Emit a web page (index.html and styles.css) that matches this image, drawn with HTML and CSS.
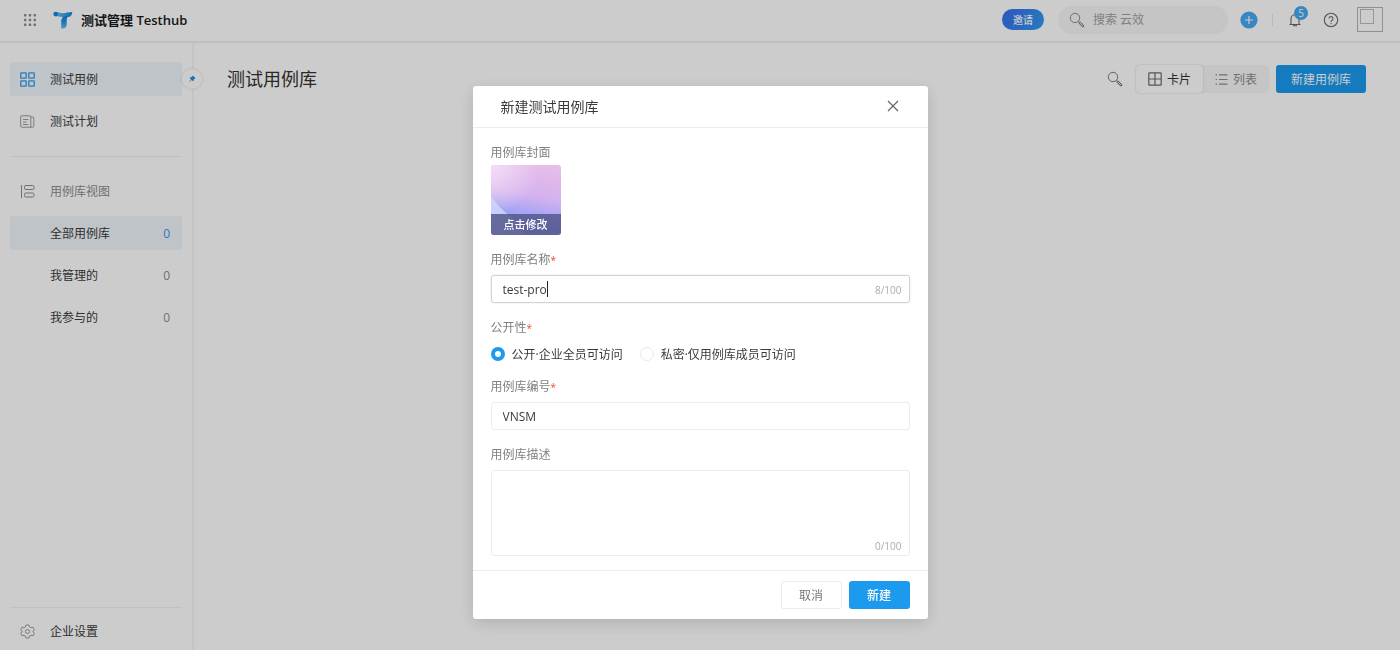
FILE: index.html
```html
<!DOCTYPE html>
<html lang="zh-CN">
<head>
<meta charset="utf-8">
<title>测试管理 Testhub</title>
<link rel="stylesheet" href="styles.css">
</head>
<body>
<div class="app">
  <header class="topbar">
    <button class="icon-btn apps" aria-label="应用">
      <svg width="12" height="12" viewBox="0 0 12 12" fill="#8c8c8c"><rect width="2.400" height="2.400" rx=".6"/><rect x="4.800" width="2.400" height="2.400" rx=".6"/><rect x="9.600" width="2.400" height="2.400" rx=".6"/><rect y="4.800" width="2.400" height="2.400" rx=".6"/><rect x="4.800" y="4.800" width="2.400" height="2.400" rx=".6"/><rect x="9.600" y="4.800" width="2.400" height="2.400" rx=".6"/><rect y="9.600" width="2.400" height="2.400" rx=".6"/><rect x="4.800" y="9.600" width="2.400" height="2.400" rx=".6"/><rect x="9.600" y="9.600" width="2.400" height="2.400" rx=".6"/></svg>
    </button>
    <a class="brand" href="#">
      <svg width="20" height="18" viewBox="0 0 20 18">
        <defs>
          <linearGradient id="stem" x1="0" y1="0" x2="0" y2="1"><stop offset="0" stop-color="#0a7fd6"/><stop offset=".5" stop-color="#1b9aee"/><stop offset="1" stop-color="#74bdf0"/></linearGradient>
          <linearGradient id="bar" x1="0" y1="0" x2="1" y2="0"><stop offset="0" stop-color="#6cc0f5"/><stop offset="1" stop-color="#0b86dc"/></linearGradient>
        </defs>
        <path d="M3 1C6 1.200 7.500 2.200 10 2.200 13 2.200 15 1 19.300 1 19 4.500 17.500 5.900 14.800 5.900L8.500 5.900C6.500 5.900 5.500 5.200 3.200 5.200Z" fill="url(#bar)"/>
        <path d="M8.200 17.500V10.600C8.200 7.400 10 5.200 13.400 5.200L15.800 5.600C14 6.200 13.700 7.400 13.700 9V13.500C13.700 16.100 12.200 17.500 9.800 17.500Z" fill="url(#stem)"/>
        <circle cx="2.700" cy="3.100" r="2.400" fill="#1287df"/>
      </svg>
      <span>测试管理 Testhub</span>
    </a>
    <button class="invite">邀请</button>
    <label class="search">
      <svg width="16" height="16" viewBox="0 0 16 16" fill="none" stroke="#8c8c8c"><circle cx="6" cy="6" r="4.700"/><path d="M9.400 9.400l1.300 1.300"/><path d="M10.800 10.800l3.200 3.200" stroke-width="2.600" stroke-linecap="round"/><path d="M10.900 10.900l3 3" stroke="#f2f2f2" stroke-width=".9"/></svg>
      <input type="text" placeholder="搜索 云效" aria-label="搜索 云效">
    </label>
    <button class="icon-btn add" aria-label="新建">
      <svg width="18" height="18" viewBox="0 0 18 18"><circle cx="9" cy="9" r="8.600" fill="#45a9f0"/><path d="M5 9h8M9 5v8" stroke="#fff" stroke-width="1.200"/></svg>
    </button>
    <span class="divider"></span>
    <button class="icon-btn bell" aria-label="通知">
      <svg width="14" height="15" viewBox="0 0 14 15" fill="none" stroke="#6b6b6b" stroke-width="1.100"><path d="M1.500 12.500h11M3 12.500V6.800a4 4 0 0 1 8 0v5.700M5.600 13v.8h2.800V13M7 1.200v1.500"/></svg>
      <span class="badge">5</span>
    </button>
    <button class="icon-btn help" aria-label="帮助">
      <svg width="16" height="16" viewBox="0 0 16 16" fill="none" stroke="#6b6b6b" stroke-width="1.100"><circle cx="8" cy="8" r="6.700"/><path d="M6 6.500a2 2 0 1 1 3.100 1.700C8.300 8.700 8 9 8 9.900"/><path d="M8 11v1.200"/></svg>
    </button>
    <button class="icon-btn avatar" aria-label="头像">
      <svg width="26" height="26" viewBox="0 0 26 26" fill="none"><rect x=".5" y=".5" width="25" height="24" stroke="#b4b4b4"/><rect x="3.500" y="2.500" width="13" height="14" stroke="#bcbcbc"/></svg>
    </button>
  </header>

  <div class="workspace">
    <aside class="sidebar">
      <nav class="nav">
        <a class="nav-item active" href="#">
          <svg width="15" height="15" viewBox="0 0 15 15" fill="none" stroke="#329fea" stroke-width="1.300"><rect x=".8" y=".8" width="5.400" height="5.400" rx=".4"/><rect x="8.800" y=".8" width="5.400" height="5.400" rx=".4"/><rect x=".8" y="8.800" width="5.400" height="5.400" rx=".4"/><rect x="8.800" y="8.800" width="5.400" height="5.400" rx=".4"/></svg>
          <span>测试用例</span>
        </a>
        <a class="nav-item" href="#">
          <svg width="15" height="15" viewBox="0 0 15 15" fill="none" stroke="#9b9b9b"><path d="M10.800 13.200V2.800a1 1 0 0 0-1-1H1.700a1 1 0 0 0-1 1v9.400a1 1 0 0 0 1 1h11.100a1 1 0 0 0 1-1V4a1 1 0 0 0-1-1h-2M3 5.500h5.300M3 8h3.500M3 10.500h5.300"/></svg>
          <span>测试计划</span>
        </a>
      </nav>
      <hr class="rule">
      <h2 class="nav-item nav-title">
        <svg width="15" height="15" viewBox="0 0 15 15" fill="none" stroke="#8c8c8c"><path d="M1.500 1v13"/><rect x="4.500" y="1.500" width="9.500" height="4" rx="1.300"/><rect x="4.500" y="9" width="9.500" height="4" rx="1.300"/></svg>
        <span>用例库视图</span>
      </h2>
      <nav class="nav">
        <a class="nav-item sub active" href="#"><span>全部用例库</span><span class="count">0</span></a>
        <a class="nav-item sub" href="#"><span>我管理的</span><span class="count">0</span></a>
        <a class="nav-item sub" href="#"><span>我参与的</span><span class="count">0</span></a>
      </nav>
      <div class="sidebar-foot">
        <a class="nav-item" href="#">
          <svg width="15" height="15" viewBox="0 0 15 15" fill="none" stroke="#9b9b9b"><path d="M6 1h3l.6 1.900 1.500.8 2-.4 1.200 2.400L13 7.200v.6l1.300 1.500-1.200 2.400-2-.4-1.500.8L9 14H6l-.6-1.900-1.500-.8-2 .4L.7 9.300 2 7.800v-.6L.7 5.700l1.200-2.400 2 .4 1.500-.8Z" stroke-linejoin="round"/><circle cx="7.500" cy="7.500" r="2"/></svg>
          <span>企业设置</span>
        </a>
      </div>
      <button class="pin" aria-label="固定侧栏">
        <svg width="8" height="8" viewBox="0 0 8 8"><path d="M4.800.4 7.600 3.200 6.800 3.600 5.700 4.700 5.500 6.500 3.600 5 .5 7.700 3 4.400 1.500 2.500 3.300 2.300 4.400 1.200Z" fill="#1b8fe6"/></svg>
      </button>
    </aside>

    <main class="main">
      <div class="toolbar">
        <h1>测试用例库</h1>
        <button class="icon-btn find" aria-label="搜索">
          <svg width="16" height="16" viewBox="0 0 16 16" fill="none" stroke="#7c7c7c"><circle cx="6" cy="6" r="4.700"/><path d="M9.400 9.400l1.300 1.300"/><path d="M10.800 10.800l3.200 3.200" stroke-width="2.600" stroke-linecap="round"/><path d="M10.900 10.900l3 3" stroke="#fff" stroke-width=".9"/></svg>
        </button>
        <div class="switch">
          <button class="switch-btn on">
            <svg width="14" height="14" viewBox="0 0 14 14" fill="none" stroke="#6b6b6b" stroke-width="1.200"><rect x=".8" y=".8" width="12.400" height="12.400" rx=".6"/><path d="M7 1v12M1 7h12"/></svg>
            <span>卡片</span>
          </button>
          <button class="switch-btn">
            <svg width="13" height="13" viewBox="0 0 13 13" fill="none" stroke="#8c8c8c" stroke-width="1.200"><path d="M4 1.800h8.500M4 6.500h8.500M4 11.200h8.500M.6 1.800h1.500M.6 6.500h1.500M.6 11.200h1.500"/></svg>
            <span>列表</span>
          </button>
        </div>
        <button class="btn primary">新建用例库</button>
      </div>
    </main>
  </div>
</div>

<div class="overlay">
  <form class="dialog" role="dialog" aria-labelledby="dialog-title">
    <header class="dialog-head">
      <h2 id="dialog-title">新建测试用例库</h2>
      <button type="button" class="icon-btn close" aria-label="关闭">
        <svg width="12" height="12" viewBox="0 0 12 12" stroke="#666" stroke-width="1.200"><path d="M1 1l10 10M11 1 1 11"/></svg>
      </button>
    </header>
    <div class="dialog-body">
      <div class="field cover-field">
        <span class="label">用例库封面</span>
        <button type="button" class="cover">
          <svg class="cover-art" viewBox="0 0 70 70">
            <defs>
              <linearGradient id="sky" x1=".6" y1="0" x2=".4" y2="1"><stop offset="0" stop-color="#e6bce9"/><stop offset=".42" stop-color="#d3b2ee"/><stop offset=".72" stop-color="#9fa3f5"/><stop offset="1" stop-color="#8792ee"/></linearGradient>
              <radialGradient id="glow" cx="0" cy="0" r=".7"><stop offset="0" stop-color="#f4def6"/><stop offset="1" stop-color="#f4def6" stop-opacity="0"/></radialGradient>
              <linearGradient id="hill" x1="0" y1="0" x2="1" y2="1"><stop offset="0" stop-color="#cfd6fb"/><stop offset="1" stop-color="#b5bdf6"/></linearGradient>
            </defs>
            <rect width="70" height="70" fill="url(#sky)"/>
            <rect width="70" height="70" fill="url(#glow)"/>
            <path d="M0 31C6 40 14 48 24 55L34 70H0Z" fill="url(#hill)"/>
          </svg>
          <span class="cover-text">点击修改</span>
        </button>
      </div>
      <div class="field">
        <label class="label" for="name">用例库名称<em>*</em></label>
        <label class="control focused" for="name">
          <input id="name" class="fit" type="text" value="test-pro" maxlength="100">
          <span class="caret"></span>
          <span class="counter">8/100</span>
        </label>
      </div>
      <fieldset class="field options">
        <legend class="label">公开性<em>*</em></legend>
        <div class="radios">
          <label><input type="radio" name="scope" checked><span>公开·企业全员可访问</span></label>
          <label><input type="radio" name="scope"><span>私密·仅用例库成员可访问</span></label>
        </div>
      </fieldset>
      <div class="field">
        <label class="label" for="code">用例库编号<em>*</em></label>
        <div class="control"><input id="code" type="text" value="VNSM"></div>
      </div>
      <div class="field">
        <label class="label" for="desc">用例库描述</label>
        <div class="control area">
          <textarea id="desc" rows="3"></textarea>
          <span class="counter">0/100</span>
        </div>
      </div>
    </div>
    <footer class="dialog-foot">
      <button type="button" class="btn">取消</button>
      <button type="button" class="btn primary strong">新建</button>
    </footer>
  </form>
</div>
</body>
</html>
```

FILE: styles.css
```css
* { box-sizing: border-box; }

body {
  margin: 0;
  background: #fff;
  color: #3a3a3a;
  font: 12px/18px "Open Sans", "Noto Sans CJK SC", sans-serif;
}

svg { display: block; flex: none; }
button, input, textarea { font: inherit; color: inherit; }
button { margin: 0; padding: 0; border: 0; background: none; cursor: pointer; }
a { color: inherit; text-decoration: none; }
h1, h2 { margin: 0; font-weight: 400; }

.app { display: flex; flex-direction: column; min-height: 100vh; }
.icon-btn { display: flex; align-items: center; justify-content: center; }

/* Top bar */
.topbar {
  display: flex;
  align-items: center;
  height: 41px;
  padding: 0 17px 2px 24px;
  box-shadow: 0 1px 3px rgba(0, 0, 0, .12);
}
.brand {
  display: flex;
  align-items: center;
  gap: 8px;
  margin: 0 auto 0 17px;
  color: #1a1a1a;
  font-size: 13px;
  font-weight: 600;
}
.invite {
  width: 42px;
  height: 21px;
  border-radius: 11px;
  background: linear-gradient(120deg, #3a6cf0, #2f9bf2);
  color: #fff;
  font-size: 10px;
  font-weight: 500;
}
.search {
  display: flex;
  align-items: center;
  gap: 8px;
  width: 170px;
  height: 28px;
  margin: 0 12px 0 14px;
  padding: 0 11px;
  border-radius: 14px;
  background: #f7f7f7;
}
.search input { width: 100%; min-width: 0; padding: 0; border: 0; background: none; outline: 0; }
.search input::placeholder { color: #a0a0a0; opacity: 1; }
.divider { width: 1px; height: 12px; margin: 0 15px 0 14px; background: #e8e8e8; }
.bell { position: relative; }
.help { margin: 0 18px 0 21px; }
.badge {
  position: absolute;
  top: -6px;
  right: -6px;
  width: 14px;
  height: 14px;
  border-radius: 50%;
  background: #45a9f0;
  color: #fff;
  font-size: 10px;
  line-height: 14px;
  text-align: center;
}

/* Sidebar */
.workspace { display: flex; flex: 1; }
.sidebar {
  position: relative;
  display: flex;
  flex-direction: column;
  width: 193px;
  padding: 21px 10px 2px;
  border-right: 1px solid #f4f4f4;
  box-shadow: 1px 0 2px rgba(0, 0, 0, .03);
}
.nav { display: flex; flex-direction: column; gap: 8px; }
.nav-item {
  display: flex;
  align-items: center;
  gap: 15px;
  height: 34px;
  padding: 0 12px 0 10px;
  border-radius: 3px;
  font-size: 12px;
}
.nav-item span, .switch-btn span, .radios span { padding-top: 2px; }
.nav-item.active { background: #eff5fa; }
.nav-title { margin-bottom: 8px; color: #8c8c8c; }
.nav-item.sub { justify-content: space-between; padding-left: 40px; }
.count { color: #8c8c8c; }
.active .count { color: #3a9ae6; }
.rule { width: 170px; margin: 18px auto 17px; border: 0; border-top: 1px solid #ebebeb; }
.sidebar-foot { margin-top: auto; padding-top: 6px; border-top: 1px solid #f2f2f2; }
.pin {
  position: absolute;
  top: 28px;
  right: -10px;
  display: flex;
  align-items: center;
  justify-content: center;
  width: 20px;
  height: 20px;
  border-radius: 50%;
  background: #fff;
  box-shadow: 0 0 3px rgba(0, 0, 0, .16);
}

/* Content */
.main { flex: 1; padding: 24px 34px 0; }
.toolbar { display: flex; align-items: center; }
.toolbar h1 { margin-right: auto; color: #333; font-size: 18px; line-height: 28px; }
.find { margin-right: 13px; }
.switch { display: flex; margin-right: 7px; border-radius: 4px; background: #f7f7f7; }
.switch-btn {
  display: flex;
  align-items: center;
  gap: 5px;
  height: 28px;
  padding: 0 12px;
  border-radius: 4px;
  color: #8c8c8c;
}
.switch-btn.on { background: #fff; color: #333; box-shadow: 0 0 2px rgba(0, 0, 0, .2); }

.btn {
  height: 28px;
  padding: 2px 15px 0;
  border: 0;
  border-radius: 3px;
  background: #fff;
  box-shadow: inset 0 0 0 1px #ececec;
  color: #777;
}
.btn.primary { background: #1b9aee; box-shadow: none; color: #fff; }
.btn.strong { font-weight: 500; }

/* Dialog */
.overlay {
  position: fixed;
  inset: 0;
  display: flex;
  align-items: flex-start;
  justify-content: center;
  padding-top: 86px;
  background: rgba(0, 0, 0, .2);
}
.dialog {
  width: 455px;
  border-radius: 3px;
  background: #fff;
  box-shadow: 0 4px 16px rgba(0, 0, 0, .14);
}
.dialog-head {
  display: flex;
  align-items: center;
  justify-content: space-between;
  height: 42px;
  padding: 0 29px 0 28px;
  border-bottom: 1px solid #ececec;
}
.dialog-head h2 { font-size: 14px; line-height: 20px; }
.close { padding-bottom: 2px; }
.dialog-body { display: flex; flex-direction: column; gap: 15px; padding: 15px 18px 14px; }
.field { display: flex; flex-direction: column; gap: 7px; min-width: 0; margin: 0; padding: 0; border: 0; }
.cover-field { gap: 4px; }
.label { padding: 2px 0 0; color: #808080; line-height: 16px; }
.label em { color: #f0483e; font-size: 10px; font-style: normal; line-height: 1; }
.cover {
  position: relative;
  width: 70px;
  height: 70px;
  overflow: hidden;
  border-radius: 3px;
}
.cover-art { width: 100%; height: 100%; }
.cover-text {
  position: absolute;
  inset: auto 0 0;
  height: 21px;
  background: rgba(84, 87, 138, .84);
  color: #fff;
  font-size: 11px;
  font-weight: 500;
  line-height: 22px;
}
.control {
  display: flex;
  align-items: center;
  height: 28px;
  padding: 0 7px 0 11px;
  border: 1px solid #ececec;
  border-radius: 3px;
}
.control.focused { border-color: #d2d2d2; box-shadow: 0 0 2px rgba(0, 0, 0, .12); }
.control input, .control textarea { width: 100%; min-width: 0; padding: 2px 0 0; border: 0; outline: 0; background: none; }
.control .fit { width: auto; field-sizing: content; }
.caret { width: 1px; height: 16px; background: #222; }
.counter { margin-left: auto; padding-top: 1px; color: #aaa; font-size: 10px; }
.area { align-items: flex-end; height: 86px; }
.area textarea { align-self: stretch; height: auto; padding-top: 6px; resize: none; }
.options .radios { display: flex; gap: 17px; margin-top: 10px; line-height: 14px; }
.radios label { display: flex; align-items: center; gap: 7px; }
.radios input {
  appearance: none;
  width: 14px;
  height: 14px;
  margin: 0;
  border: 1px solid #e8e8e8;
  border-radius: 50%;
  background: #fff;
}
.radios input:checked { border: 4px solid #1b9aee; }
.dialog-foot {
  display: flex;
  justify-content: flex-end;
  gap: 7px;
  padding: 10px 18px;
  border-top: 1px solid #ececec;
}
.dialog-foot .btn { width: 61px; }
```
